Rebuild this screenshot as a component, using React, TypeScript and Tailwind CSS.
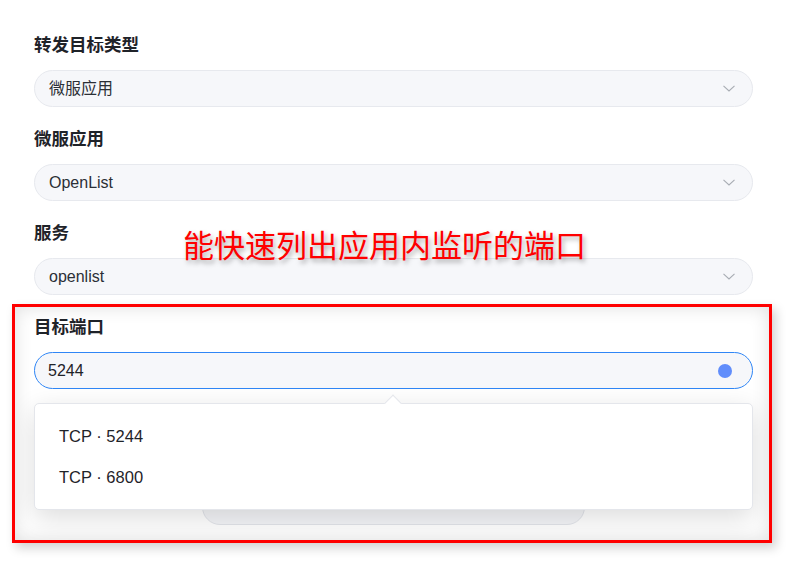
const FONT = 'font-["Liberation_Sans","Noto_Sans_CJK_SC",sans-serif]';

const fields = [
  { label: "转发目标类型", value: "微服应用" },
  { label: "微服应用", value: "OpenList" },
  { label: "服务", value: "openlist" },
];

function Chevron() {
  return (
    <svg width="12" height="7" viewBox="0 0 12 7" fill="none" className="shrink-0">
      <path d="M0.5 0.8 L6 6 L11.5 0.8" stroke="#a8acb3" strokeWidth="1.1" />
    </svg>
  );
}

function Field({ label, children }: { label: string; children: React.ReactNode }) {
  return (
    <div className="flex flex-col gap-[13px]">
      <div className="h-6 leading-6 text-[17.5px] font-bold text-[#1f2329]">{label}</div>
      {children}
    </div>
  );
}

export default function App() {
  const ports = ["TCP · 5244", "TCP · 6800"];

  return (
    <div className={`relative min-h-screen bg-white ${FONT}`}>
      <div className="w-[787px] px-[34px] pt-[33px] pb-12 flex flex-col gap-5">
        {fields.map((f) => (
          <Field key={f.label} label={f.label}>
            <div className="h-[37px] rounded-full bg-[#f6f7fa] border border-[#e7e9ee] flex items-center justify-between pl-[14px] pr-[17px]">
              <span className="text-[16px] text-[#2b2f36]">{f.value}</span>
              <Chevron />
            </div>
          </Field>
        ))}

        <Field label="目标端口">
          <div className="relative">
            <div className="h-[37px] rounded-full bg-[#f6f7fa] border-[1.5px] border-[#2f86f6] flex items-center justify-between pl-[13px] pr-[20px]">
              <span className="text-[16px] text-[#1f2329]">5244</span>
              <span className="w-[14px] h-[14px] rounded-full bg-[#608dfb]" />
            </div>

            {/* dropdown */}
            <div className="absolute z-10 inset-x-0 top-[51px] h-[107px] bg-white border border-[#e4e6eb] rounded-[5px] shadow-[0_8px_28px_rgba(0,0,0,0.14)] pt-3 flex flex-col">
              <div className="absolute -top-[7px] left-[352px] w-3 h-3 bg-white border-l border-t border-[#e4e6eb] rotate-45" />
              {ports.map((p) => (
                <div key={p} className="h-[41px] flex items-center pl-6 text-[16.5px] text-[#1f2329]">
                  {p}
                </div>
              ))}
            </div>
          </div>
        </Field>

        <div className="mt-[80px] self-center w-[383px] h-9 rounded-full bg-[#f3f4f7] border border-[#e2e4ea]" />
      </div>

      {/* annotation */}
      <div className="absolute left-[183px] top-[231px] text-[31px] leading-none text-[#ff0000] [text-shadow:2px_3px_5px_rgba(0,0,0,0.35)] whitespace-nowrap">
        能快速列出应用内监听的端口
      </div>
      <div className="absolute z-20 pointer-events-none left-[12px] top-[304px] w-[760px] h-[239px] border-[3px] border-[#ff0000] shadow-[inset_0_0_18px_rgba(0,0,0,0.13),4px_5px_10px_rgba(0,0,0,0.18)]" />
    </div>
  );
}
